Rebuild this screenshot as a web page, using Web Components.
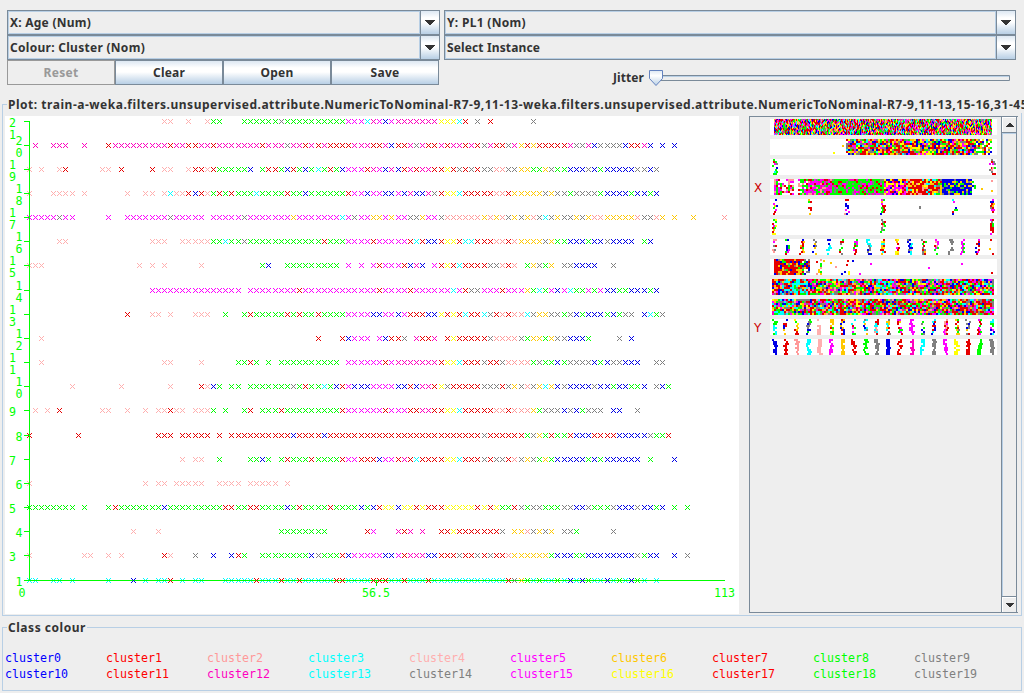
<!DOCTYPE html>
<html lang="en">
<head>
<meta charset="utf-8">
<title>Weka Clusterer Visualize</title>
<style>
html,body{margin:0;padding:0}
body{width:1024px;height:693px;overflow:hidden;background:#eee;color:#333;font:bold 12px/16px "Noto Sans","Open Sans",sans-serif}
</style>
</head>
<body>
<viz-window></viz-window>
<script>
const COLORS={b:'#0000e6',r:'#e60000',P:'#ff9999',c:'#00ffff',p:'#ffafaf',m:'#ff00ff',o:'#ffc800',g:'#00ff00',k:'#808080',M:'#ff00bf',y:'#ffff00'};
const define=(name,html,setup)=>customElements.define(name,class extends HTMLElement{
  connectedCallback(){
    if(this.shadowRoot)return;
    this.attachShadow({mode:'open'}).innerHTML=html;
    if(setup)setup.call(this,this.shadowRoot);
  }
});

/* Text that spreads its letters to take exactly the given width */
define('fit-text','<style>:host{display:inline-block;white-space:pre}span{display:inline-block}</style><span></span>',function(r){
  const s=r.querySelector('span');
  s.textContent=this.getAttribute('text');
  const w=+this.getAttribute('width');
  s.style.letterSpacing=((w-s.getBoundingClientRect().width)/s.textContent.length)+'px';
});

define('java-combo',`<style>
:host{display:flex;height:25px;box-sizing:border-box;border:1px solid #7a8a99}
.v{flex:1;border:1px solid #b8cfe5;padding:3px 0 0 1px;line-height:16px;box-sizing:border-box}
.a{width:19px;box-sizing:border-box;border-left:1px solid #7a8a99;background:linear-gradient(#dde8f3,#fff 30%,#fff 48%,#b8cfe5);display:flex;align-items:center;justify-content:center}
svg{display:block}
</style><div class="v"><slot></slot></div><div class="a"><svg width="10" height="5" shape-rendering="crispEdges"><path fill="#333" d="M0 0h10v1h-1v1h-1v1h-1v1h-1v1h-2v-1h-1v-1h-1v-1h-1v-1h-1z"/></svg></div>`);

define('java-button',`<style>
:host{display:block;flex:1;height:25px;box-sizing:border-box;border:1px solid #7a8a99;background:linear-gradient(#dde8f3,#fff 30%,#fff 48%,#b8cfe5);text-align:center;padding-top:4px;line-height:16px}
:host([disabled]){background:#eee;border-color:#999;color:#999}
</style><slot></slot>`);

define('java-slider',`<style>
:host{display:flex;align-items:center}
svg{display:block}
</style><svg width="364" height="18" viewBox="0 0 364 18">
<defs><linearGradient id="g" x2="0" y2="1"><stop offset="0" stop-color="#dde8f3"/><stop offset=".35" stop-color="#fff"/><stop offset="1" stop-color="#b8cfe5"/></linearGradient></defs>
<path d="M8.500 5.500H361.500V10.500H8.500z" fill="#eee" stroke="#7a8a99"/><path d="M9 6.500H361" stroke="#b8cfe5"/>
<path d="M1.500 .500H14.500V8.500L8 15.500L1.500 8.500z" fill="url(#g)" stroke="#6382bf"/></svg>`);

define('titled-panel',`<style>
:host{display:block;position:relative;box-sizing:border-box;border:1px solid #b8cfe5}
.t{position:absolute;left:4px;top:-8px;background:#eee;padding:0 1px;line-height:16px;white-space:nowrap}
</style><div class="t"><slot name="title"></slot></div><slot></slot>`);

/* Scatter plot: every row holds runs of "first column + colour letters" */
const ROWS=[
[121,'22pp 26p 29pgg 35ggggggkggggggggggmmmcMmbmMMMMMMMyyycr 73k 75r 82k'],
[145,'1M 4MMM 9M 13rMMMMMMMMMrMMrrMMrMMMMMMM 38rMMMkMMrMrMrrrrMMMrrMbrrMkMrrMrMMrMrkMr 77rkMororrrrrMkkMbkkkkbrrMb 103b 105b'],
[169,'0p 2p 5pr 12pp 15r 20r 22pp 26prrprgggggb 38grrgbrgbgcgrgbmmmrMmbMbrMrMMrryrkrkrkkP 77Pkkooggokggbbbkbgbbbbbkkbk'],
[193,'0p 4pppp 9p 16p 19pp 22pcpprbrpgrgrgggc 38ggggrggbggggggrmmbmmbbmbMbbMkryycrrrrrP 77Proooookokkgkkkkgbbbbgbbgb'],
[217,'0mmmmmkmm 13m 16mmmmmmmkmmmmm 30mmmmmkmm 38mmmmmommmmmmmcmkmmoomommkkommkPPPPPPoPo 77PkokoPkckokkokoPPoooooPkkPo 105o 108o 113P'],
[241,'5pp 20ppp 25pppppggcggkgg 38ggggggggggrgggmmmmrmmmmmrcrbbryyrccrrrP 77PrPooookoggbbbgbbkbbbb 100gb'],
[265,'0ppp 18p 20p 22p 28p 38gb 42ggggggggg 52m 54m 56mrmmmrbMb 66mryrcrrrrkk 77PrP 81gokgo 87kkbbbb 95k'],
[290,'20mmmmmmmmmmmmmmm 36mm 38mmmmmmrmmmmmmmmmmmmrmmmmrmmmmmmcmrkkmmm 77rmmmogcgmbmcggmgmbbggbbbgb'],
[314,'16r 20pp 23p 27ppp 32g 35grg 38ggggrgrggrggggmmmmbbmmbmrrrbbyryrcrrckrP 77PrPPckookkgkbgbbbgbgkk 100bcgk'],
[338,'2p 47r 51rbmmm 57mbrrk 63MrrM 68ryrrrrrkP 77PPPkgoogokkbbbg 96k 98b'],
[362,'2p 22pp 28p 34ggrg 39g 41gggggggggg 52mmmmmmrmMMMMMMMryycrrrkrr 77kPPPPgkggbgkkkkbgbkkbbb 102kk'],
[386,'7p 15p 23p 28rpbg 33gg 36gg 38gggggkgrggcgbrmbbbmmmmbbrbMMrykrrrrrkkk 77rkokPkocobkbbbbkbbgbbggb 102kbg'],
[410,'1p 3p 5r 12pp 16p 19p 21pprpp 27pppg 32g 35gr 38gggrgggggggggrmmmmmmrmmmrrMMrryycrrrrrP 77PrPPPogkkkbkbgkkk 95bb 99k'],
[435,'0r 8r 21rrr 25rrrrr 31r 33rrrrr 38rrrrrbrrrrbrrrrrrrrrrrrrrrrrrrrrrrrrkrr 77rrrrgkogrggrbbbrrrrbbbbbkggr'],
[459,'25p 27pp 31g 36gg 38bg 41grgggrggggrmmrrrbmmrMrcrrrryycrrrkrk 77krPkokgogbbbbbgbgbbbbbb 101g 105b'],
[483,'0p 19p 21pp 24ppppp 31pppp 36ppppp 42p'],
[507,'0gggggggg 9g 13grgggggggbgggggggggrrggrr 38ggggbgrggggrggggbgbryybyyryrrryyyyyryry 77ggrkgkkgggkkbbkgggkbbbkbbgb 105g 107g'],
[531,'17p 21p 41gggggggg 55rm 60MrM 64M 67rryrrrrrrr 77k 79ooPkoko 87kkg 95k'],
[555,'0p 9pp 13p 15p 22rp 27k 30b 33brg 38ggggggggbkgggrbmmmmmbbmrMMMbbrrrkrrkrkr 77rPoooooogbbbggbbbbbbbbkgbb 105b 107k'],
[580,'0cc 4cc 7c 13c 17b 19c 21ccr 25c 27cc 32cccccr 38cccrccrcccccrrccccrrrccrcccrccccccccccc 77crkogcgccgcbcbgccbcgcbgc 102c']
];
const LABELS=['21','20','19','18','17','16','15','14','13','12','11','10','9','8','7','6','5','4','3','1'];

define('scatter-plot',`<style>
:host{display:block;width:734px;height:498px;background:#fff}
svg{display:block}
text{font:11.63px "DejaVu Sans Mono",monospace;fill:#00ff00}
</style><svg width="734" height="498" viewBox="5 116 734 498" shape-rendering="crispEdges"></svg>`,function(r){
  const low={},high={};
  for(const [y,runs] of ROWS)for(const run of runs.split(' ')){
    const n0=parseInt(run);
    [...run.replace(/\d+/,'')].forEach((ch,i)=>{
      const x=29+Math.floor((n0+i)*695/113);
      const set=ch==='c'||ch==='p'?low:high;
      let d='';
      for(let k=-2;k<3;k++){
        d+=`M${x+k} ${y+k}h1v1h-1z`;
        if(k)d+=`M${x+k} ${y-k}h1v1h-1z`;
      }
      set[ch]=(set[ch]||'')+d;
    });
  }
  const paths=s=>Object.entries(s).map(([c,d])=>`<path fill="${COLORS[c]}" d="${d}"/>`).join('');
  let axis='M24 580h701v1H24zM376 580h1v6h-1z',text='';
  ROWS.forEach(([y],i)=>{
    axis+=`M24 ${y}h6v1h-6z`;
    const x=i%2?15.500:9,l=LABELS[i],b=l.length===1||i===0?y+6:y;
    [...l].forEach((c,k)=>text+=`<text x="${x}" y="${b+12*k}">${c}</text>`);
  });
  text+='<text x="18.500" y="597">0</text><text x="362" y="597">56.5</text><text x="714" y="597">113</text>';
  r.querySelector('svg').innerHTML=paths(low)+`<path fill="#00ff00" d="${axis}"/>`+paths(high)+'<path fill="#00ff00" d="M29 121h1v460h-1z"/>'+text;
});

/* One-dimensional strips, one per attribute */
define('attribute-bar',`<style>
:host{display:grid;grid-template-columns:20px 227px;height:20px}
b{font:12px/18px "DejaVu Sans",sans-serif;color:#cc0000;padding-left:4px}
canvas{display:block;background:#fff;width:227px;height:16px}
</style><b></b><canvas width="227" height="16"></canvas>`,function(r){
  r.querySelector('b').textContent=this.getAttribute('axis')||'';
  const type=+this.getAttribute('kind'),g=r.querySelector('canvas').getContext('2d');
  let seed=type*7919+17;
  const rnd=()=>(seed=(seed*1664525+1013904223)%4294967296)/4294967296;
  const pick=s=>COLORS[s[Math.floor(rnd()*s.length)]];
  const dot=(x,y,c)=>{g.fillStyle=c;g.fillRect(Math.round(x),Math.round(y),2,2)};
  const ALL='brPckmogrkbrMcmyrgkgro';
  const fill=(a,b,s,density=1)=>{for(let x=a;x<b;x+=2)for(let y=0;y<16;y+=2)if(rnd()<density)dot(x,y,pick(s))};
  const strand=(cx,s,density=1)=>{
    let o=0;
    for(let y=0;y<16;y+=2){
      o=Math.max(-2,Math.min(1,o+[-2,-1,1,2][Math.floor(rnd()*4)]));
      if(rnd()<density)dot(cx+o-1,y,pick(s));
      if(rnd()<density*.65)dot(cx+o+(o>0?-3:1),y,pick(s));
    }
  };
  const strands=(list,s,d)=>list.forEach(x=>strand((x-78)/3,s,d));
  if(type===1){for(let x=4;x<222;x++)for(let y=-(x%2);y<16;y+=2){g.fillStyle=pick(ALL);g.fillRect(x,y,1,2)}}
  if(type===2){dot(63,13,COLORS.y);dot(72,6,COLORS.o);fill(76,80,ALL,.7);fill(78,206,'brogrkbyrrcmyogk');fill(206,222,'brogkgy',.6)}
  if(type===3){strands([92],'gbkmrgc',.8);strands([740,750],'rPmkg',.45)}
  if(type===4){fill(4,6,'mP');fill(6,12,'mggr',.8);fill(12,24,'PPgmr',.4);fill(28,38,'gmPgr',.7);fill(38,62,'mMmrPgk');fill(62,114,'ggggmgMkr');fill(114,136,'mMmbyry');fill(136,166,'rrryPorc');fill(166,172,'ogkr');fill(172,202,'bbbbkbog');fill(202,206,'bg',.4);
    [[211,9,'o'],[221,1,'P'],[221,11,'o']].forEach(d=>dot(d[0],d[1],COLORS[d[2]]))}
  if(type===5){strands([92],ALL,.8);strands([202],'rgkrob',.8);strands([309],'kcPmrb',.7);strands([417],'gmorgb',.9);strands([633],'bcgrmr',.8);strands([745],'gomkbr',.9);g.fillStyle=COLORS.k;g.fillRect(149,7,2,3)}
  if(type===6){strands([92],'rgmryo',.9);strands([417],'kkPmryg',.8);strands([745],'rgrmrk')}
  if(type===7){[['93','rmkP'],['131','rgcbm'],['173','borg'],['214','ocbk'],['255','cccb'],['294','gkr'],['335','rgm'],['375','cbkm'],['417','ryoc'],['459','yrom'],['497','ckPb'],['540','rkgo'],['578','mrgP'],['620','k'],['658','gmmk'],['702','mbrr']].forEach(a=>strand((a[0]-78)/3,a[1],.85));dot(220,0,COLORS.r);dot(219,9,COLORS.o);dot(222,14,COLORS.r)}
  if(type===8){fill(4,32,'rrorrbrogkr');fill(32,40,'brkgor',.65);fill(40,52,'brgPor',.25);
    [[82,1,'b'],[76,5,'r'],[65,7,'P'],[74,12,'b'],[78,12,'y'],[78,14,'y'],[89,14,'m'],[100,4,'m'],[158,8,'m'],[191,4,'m'],[221,13,'r'],[77,1,'r'],[60,3,'o'],[53,1,'o'],[71,14,'b']].forEach(d=>dot(d[0],d[1],COLORS[d[2]]))}
  if(type===9){fill(2,12,ALL+'gb');fill(12,38,'cccbogrcrk');fill(38,106,ALL+'rgP');fill(106,122,'cckbogrm');fill(122,224,ALL+'r')}
  if(type===10){fill(2,30,ALL+'gc');fill(30,224,ALL+'rr')}
  const TWENTY=[93,126,160,195,228,264,297,330,366,400,433,468,504,538,570,606,639,673,708,745];
  if(type===11)['ccg','brro','rrgoy','kbkg','p','gor','bror','rgcmg','ckbo','rcrP','orck','rgmo','m','kbgo','bcr','Pmr','kogr','brok','rgmr','gbmc'].forEach((s,i)=>strand((TWENTY[i]-78)/3,s,i%3?.8:1));
  if(type===12)[...'brPcpmorgkbrMckmyrgk'].forEach((s,i)=>strand((TWENTY[i]-78)/3,s));
});

define('attribute-panel',`<style>
:host{display:flex;width:269px;height:497px;box-sizing:border-box;border:1px solid #7a8a99;border-right:0}
.list{width:251px;padding-top:2px;box-sizing:border-box}
.sb{width:16px;box-sizing:border-box;border:1px solid #7a8a99;border-top:0;border-bottom:0;display:flex;flex-direction:column}
.b{height:15px;border:1px solid #fff;border-width:1px 0 0 1px;box-sizing:border-box;display:flex;align-items:center;justify-content:center}
.track{flex:1;border:solid #7a8a99;border-width:1px 0;box-shadow:inset 1px 1px #b8cfe5}
svg{display:block}
</style><div class="list"></div><div class="sb"><div class="b"><svg width="8" height="4" shape-rendering="crispEdges"><path fill="#333" d="M3 0h2v1h1v1h1v1h1v1H0V3h1V2h1V1h1z"/></svg></div><div class="track"></div><div class="b"><svg width="8" height="4" shape-rendering="crispEdges"><path fill="#333" d="M0 0h8v1H7v1H6v1H5v1H3V3H2V2H1V1H0z"/></svg></div></div>`,function(r){
  r.querySelector('.list').innerHTML=Array.from({length:12},(_,i)=>`<attribute-bar kind="${i+1}"${i===3?' axis="X"':i===10?' axis="Y"':''}></attribute-bar>`).join('');
});

define('class-legend',`<style>
:host{display:grid;grid-template-columns:repeat(10,101px);grid-auto-rows:16px;font:11.63px/16px "DejaVu Sans Mono",monospace}
</style>`,function(r){
  [...'brPcpmorgkbrMckmyrgk'].forEach((c,i)=>{
    const s=document.createElement('span');s.textContent='cluster'+i;s.style.color=c==='b'?'#0000ff':c==='r'?'#ff0000':COLORS[c];r.append(s);
  });
});

define('viz-window',`<style>
:host{display:block;width:1024px;height:693px;overflow:hidden}
.top{display:grid;grid-template-columns:433px 572px;column-gap:4px;padding:10px 0 0 7px;height:104px;box-sizing:border-box}
.buttons{display:flex;width:432px}
.jitter{display:flex;padding:10px 0 0 168px;gap:4px}
.jitter fit-text{margin:0 0 0 1px}
.plot{margin:0 2px;height:512px}
.body{display:flex;gap:10px;padding:11px 0 0 2px}
.legend{margin:11px 2px 0;height:64px}
class-legend{padding:22px 0 0 2px}
</style>
<div class="top">
 <div>
  <java-combo><fit-text text="X: Age (Num)" width="81"></fit-text></java-combo>
  <java-combo><fit-text text="Colour: Cluster (Nom)" width="135"></fit-text></java-combo>
  <div class="buttons"><java-button disabled><fit-text text="Reset" width="35"></fit-text></java-button><java-button><fit-text text="Clear" width="32"></fit-text></java-button><java-button><fit-text text="Open" width="33"></fit-text></java-button><java-button><fit-text text="Save" width="29"></fit-text></java-button></div>
 </div>
 <div>
  <java-combo><fit-text text="Y: PL1 (Nom)" width="79"></fit-text></java-combo>
  <java-combo><fit-text text="Select Instance" width="93"></fit-text></java-combo>
  <div class="jitter"><fit-text text="Jitter" width="31"></fit-text><java-slider></java-slider></div>
 </div>
</div>
<titled-panel class="plot"><fit-text slot="title" text="Plot: train-a-weka.filters.unsupervised.attribute.NumericToNominal-R7-9,11-13-weka.filters.unsupervised.attribute.NumericToNominal-R7-9,11-13,15-16,31-45" width="1020"></fit-text>
 <div class="body"><scatter-plot></scatter-plot><attribute-panel></attribute-panel></div>
</titled-panel>
<titled-panel class="legend"><fit-text slot="title" text="Class colour" width="78"></fit-text><class-legend></class-legend></titled-panel>`);
</script>
</body>
</html>
